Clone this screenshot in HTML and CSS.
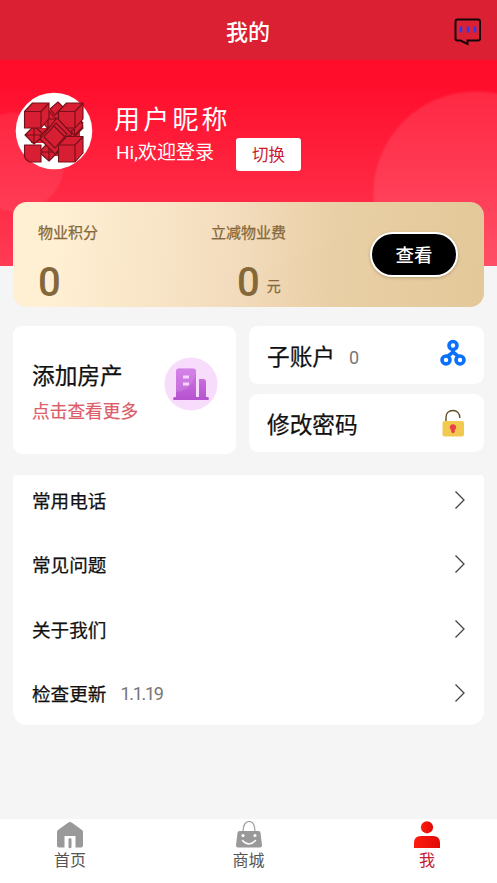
FILE: index.html
```html
<!DOCTYPE html>
<html lang="zh-CN">
<head>
<meta charset="utf-8">
<title>我的</title>
<link rel="stylesheet" href="styles.css">
</head>
<body>
<div class="app">
  <header class="bar">
    <h1>我的</h1>
    <svg class="msg" width="28" height="28" viewBox="0 0 28 28" fill="none">
      <path d="M3.500 1.500H24q2 0 2 2v17q0 2-2 2H13.500v3.500L6.500 22.500H3.500q-2 0-2-2v-17q0-2 2-2z" stroke="#120609" stroke-width="2"/>
      <path d="M7 8.500v6M14 8.500v6M21 8.500v6" stroke="#2b3cf0" stroke-width="2.500"/>
    </svg>
  </header>
  <section class="hero">
    <div class="profile">
      <svg class="avatar" width="78" height="78" viewBox="0 0 78 78">
        <circle cx="39" cy="39" r="38.300" fill="#fff"/>
        <g fill="#d81e32" stroke="#741019" stroke-width="1.100" stroke-linejoin="round">
          <path d="M33 18h12v18h20v14H46v14H32V51H16V36h17z" stroke="none"/>
          <path d="M10 43l9-9 10 9-10 9zM10 43h19M19 34v18"/>
          <path d="M56 39l5-3 7-5-3-3 3 8-8 8z"/>
          <path d="M59 36l7-7 2 5-8 9zM24 60l10-10 9 10-9 9zM24 60h19M34 50v19M35 17l8-7 5 5-8 8z"/>
          <path d="M25 27l8-9 9 10-9 9zM25 27h17M33 18v19M25 44l8-8 6 7-6 8z"/>
          <path d="M9.500 19.500H26V36H9.500zM9.500 19.500l8-8.500H34l-8 8.500zM26 19.500l8-8.500v15.500L26 36z"/>
          <path d="M43.500 19.500H60V36H43.500zM43.500 19.500l8-8.500H68l-8 8.500zM60 19.500l8-8.500v16L60 36z"/>
          <path d="M9.500 53H26v17H14.500q-4-2-5-5z"/>
          <path d="M42 26l15 16-17 20-15-15z"/>
          <path d="M41 31l11 11-12 14-11-11zM29 45l10-11 11 11M53 43l6 3-8 5"/>
          <path d="M43.500 53H60v17H43.500zM43.500 53l8-8.500H68L60 53zM60 53l8-8.500V61l-8 9z"/>
        </g>
      </svg>
      <div class="who">
        <div class="nick">用户昵称</div>
        <div class="hi">Hi,欢迎登录</div>
      </div>
      <button class="switch">切换</button>
    </div>
  </section>
  <section class="points">
    <div class="stat first"><span class="label">物业积分</span><span class="num">0</span></div>
    <div class="stat second"><span class="label">立减物业费</span><div class="money"><span class="num">0</span><span class="unit">元</span></div></div>
    <button class="view">查看</button>
  </section>
  <section class="tiles">
    <div class="card house">
      <div><div class="big">添加房产</div><div class="more">点击查看更多</div></div>
      <svg width="54" height="54" viewBox="0 0 54 54">
        <defs><linearGradient id="b" x2="0" y2="1"><stop stop-color="#d07ae6"/><stop offset="1" stop-color="#b552cf"/></linearGradient></defs>
        <circle cx="27" cy="27" r="26.500" fill="#f8dcfb"/>
        <path d="M12 40V14.500q0-3 3-3h14q3 0 3 3V40h3V22h4q3 0 3 3v15h1.500q1.500 0 1.500 1.500T43.500 43h-33Q9 43 9 41.500t1.500-1.500z" fill="url(#b)"/>
        <path d="M12 35V14.500q0-3 3-3h14q3 0 3 3C31 24 25 34 12 35z" fill="#dd91ea" opacity=".35"/>
        <path d="M19 18.500h6v3h-6zM19 25.500h6v3h-6z" fill="#f6d5fc"/>
      </svg>
    </div>
    <div class="col">
      <div class="card small"><span class="big">子账户</span><span class="count">0</span>
        <svg width="26" height="28" viewBox="0 0 26 28" fill="none" stroke="#0b70fb" stroke-width="3.600">
          <circle cx="13" cy="6.500" r="4"/><circle cx="6" cy="21" r="4"/><circle cx="20" cy="21" r="4"/><path d="M13 10.500v3M7.500 17.500L13 13l5.500 4.500"/>
        </svg>
      </div>
      <div class="card small"><span class="big">修改密码</span>
        <svg width="26" height="28" viewBox="0 0 26 28">
          <path d="M6 13V8.500C6 4 9 1.500 13 1.500c4 0 6.800 3 6.800 7.500" fill="none" stroke="#5f4c24" stroke-width="1.400"/>
          <rect x="2.500" y="12" width="21.500" height="15.500" rx="2" fill="#f2c94f"/>
          <path d="M13 15.200c2 0 3.200 1.400 3.200 3 0 1.400-.7 2-1.400 2.700V23L13 24.500 11.200 23v-2.100c-.7-.7-1.400-1.300-1.400-2.700 0-1.600 1.200-3 3.200-3z" fill="#e9404d"/>
        </svg>
      </div>
    </div>
  </section>
  <section class="list">
    <div class="row"><span>常用电话</span><svg class="chev" width="12" height="20" viewBox="0 0 12 20"><path d="M1.500 1.500L10 10l-8.500 8.500"/></svg></div>
    <div class="row"><span>常见问题</span><svg class="chev" width="12" height="20" viewBox="0 0 12 20"><path d="M1.500 1.500L10 10l-8.500 8.500"/></svg></div>
    <div class="row"><span>关于我们</span><svg class="chev" width="12" height="20" viewBox="0 0 12 20"><path d="M1.500 1.500L10 10l-8.500 8.500"/></svg></div>
    <div class="row"><span>检查更新</span><span class="ver">1.1.19</span><svg class="chev" width="12" height="20" viewBox="0 0 12 20"><path d="M1.500 1.500L10 10l-8.500 8.500"/></svg></div>
  </section>
  <nav class="tabs">
    <div class="tab">
      <svg width="28" height="28" viewBox="0 0 28 28"><path d="M14 1q1 0 2 .8L26 9q1 .8 1 2v13.500q0 2-2 2h-5.500V15h-11v11.500H3q-2 0-2-2V11q0-1.200 1-2l10-7.200Q13 1 14 1z" fill="#999"/><path d="M14 18.500v7.300" stroke="#999" stroke-width="3" stroke-linecap="round"/></svg>
      <span>首页</span>
    </div>
    <div class="tab">
      <svg width="28" height="28" viewBox="0 0 28 28"><path d="M8 11c0-7 2.500-10.500 6-10.500S20 4 20 11" fill="none" stroke="#999" stroke-width="1.200"/><path d="M4.500 10h19q1.700 0 2 1.700L27 24q.2 2.500-2 2.500H3Q.8 26.500 1 24l1.500-12.300q.3-1.700 2-1.700z" fill="#999"/><circle cx="8" cy="14.500" r="1.500" fill="#fff"/><circle cx="20" cy="14.500" r="1.500" fill="#fff"/><path d="M7.500 19.500q6.500 7 13 0" fill="none" stroke="#fff" stroke-width="1.500" stroke-linecap="round"/></svg>
      <span>商城</span>
    </div>
    <div class="tab on">
      <svg width="28" height="28" viewBox="0 0 28 28"><defs><linearGradient id="r"><stop stop-color="#ff1a0e"/><stop offset="1" stop-color="#de0b06"/></linearGradient></defs><circle cx="14" cy="6.300" r="6.100" fill="url(#r)"/><path d="M1 27v-5q0-7 7-7h12q7 0 7 7v5z" fill="url(#r)"/></svg>
      <span>我</span>
    </div>
  </nav>
</div>
</body>
</html>
```
FILE: styles.css
```css
* { box-sizing: border-box; }
body { margin: 0; background: #f5f5f5; font-family: "Noto Sans CJK SC", sans-serif; color: #111; }
button { font-family: inherit; border: 0; padding: 0; }
svg { display: block; flex: none; }
.app { width: 497px; height: 883px; display: flex; flex-direction: column; overflow: hidden; }
.bar { height: 60px; flex: none; background: #da2032; display: grid; grid-template-columns: 1fr auto 1fr; align-items: center; padding: 3px 15px 0 14px; }
.bar h1 { grid-column: 2; margin: -3px 0 0; color: #fff; font-size: 22px; line-height: 32px; font-weight: 500; }
.msg { justify-self: end; }
.hero {
  height: 206px; flex: none; padding: 32px 15px 0;
  background:
    radial-gradient(circle at 476px 134px, rgba(255,255,255,.1) 101px, transparent 104px),
    radial-gradient(circle at 15px 102px, rgba(255,255,255,.07) 48px, transparent 51px),
    linear-gradient(#ff0d2b 10%, #ff3b55 100%);
}
.profile { display: flex; color: #fff; }
.who { margin-left: 21px; width: 123px; padding-top: 8px; white-space: nowrap; }
.nick { font-size: 26px; line-height: 36px; letter-spacing: 3.200px; }
.hi { font-family: Roboto, "Noto Sans CJK SC", sans-serif; font-size: 19px; line-height: 28px; padding-left: 2px; margin-top: 3px; }
.switch { width: 65px; height: 33px; margin: 46px 0 0 -1px; background: #fff; border-radius: 3px; color: #c91b30; font-size: 16.500px; padding-bottom: 1px; }
.points {
  height: 105px; flex: none; margin: -64px 13px 0; border-radius: 14px; padding: 18px 26px 0 25px;
  background: linear-gradient(95deg, #ffefd3 10%, #f3dcbd 47%, #e9cfa5 68%, #e3c899 100%);
  color: #84683a; display: flex;
}
.stat { display: flex; flex-direction: column; }
.first { width: 173px; }
.second { width: 159px; }
.label { font-size: 15px; line-height: 24px; -webkit-text-stroke: .25px #84683a; }
.num { font-family: Roboto, sans-serif; font-size: 40px; line-height: 44px; font-weight: 500; margin-top: 17px; }
.money { display: flex; padding-left: 26px; }
.unit { font-size: 14px; line-height: 24px; margin: 29px 0 0 7px; -webkit-text-stroke: .25px #84683a; }
.view { width: 88px; height: 45px; margin-top: 12px; border: 2px solid #fff; border-radius: 23px; background: #000; color: #fff; font-size: 18.500px; font-weight: 500; box-shadow: 0 1px 3px rgba(80,50,10,.3); padding-bottom: 2px; }
.tiles { margin: 19px 13px 0; display: grid; grid-template-columns: 223px 235px; gap: 13px; height: 128px; flex: none; }
.card { background: #fff; border-radius: 9px; display: flex; align-items: center; }
.house { justify-content: space-between; padding: 0 18px 0 19px; }
.house > svg { margin-top: -12px; }
.house > div { padding-top: 2px; }
.big { font-size: 22.700px; line-height: 34px; font-weight: 400; -webkit-text-stroke: .25px #111; }
.more { font-size: 17.700px; line-height: 28px; color: #dc5c69; margin-top: 4px; -webkit-text-stroke: .2px #dc5c69; }
.col { display: flex; flex-direction: column; gap: 10px; }
.small { height: 58px; padding: 0 18px; }
.small .big { padding-top: 2px; }
.small svg { margin-left: auto; margin-top: -4px; }
.small:last-child svg { margin-top: 0; }
.count { font-family: Roboto, sans-serif; color: #777; font-size: 18px; margin: 4px 0 0 14px; }
.list { margin: 21px 13px 0; height: 250px; flex: none; background: #fff; border-radius: 4px 4px 14px 14px; padding: 0 18px 0 19px; overflow: hidden; }
.row { height: 49px; display: flex; align-items: center; font-size: 18.600px; -webkit-text-stroke: .25px #111; margin-bottom: 15.500px; }
.row span { margin-top: -1px; }
.row .ver { font-family: Roboto, sans-serif; color: #777; -webkit-text-stroke: 0; font-size: 18px; letter-spacing: -1.300px; margin: 0 0 0 14px; }
.chev { margin-left: auto; fill: none; stroke: #444; stroke-width: 1.300; }
.tabs { margin-top: auto; height: 64px; background: #fff; display: flex; justify-content: space-between; padding: 2px 50px 0; }
.tab { width: 40px; display: flex; flex-direction: column; align-items: center; font-size: 16px; line-height: 22px; color: #555; }
.tab span { margin-top: -1px; }
.tab.on { color: #c51d33; }
```
